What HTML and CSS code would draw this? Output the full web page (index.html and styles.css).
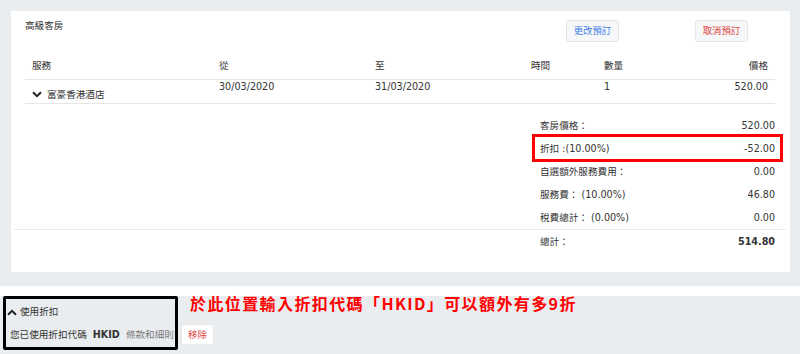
FILE: index.html
```html
<!DOCTYPE html>
<html lang="zh-Hant">
<head>
<meta charset="utf-8">
<title>訂單</title>
<link rel="stylesheet" href="styles.css">
</head>
<body>
<div class="page">
  <section class="card">
    <div class="card-head">
      <div class="room-title">高級客房</div>
      <div class="actions">
        <button class="btn btn-edit">更改預訂</button>
        <button class="btn btn-cancel">取消預訂</button>
      </div>
    </div>
    <div class="table">
      <div class="trow thead">
        <div>服務</div><div>從</div><div>至</div><div>時間</div><div>數量</div><div class="r">價格</div>
      </div>
      <div class="trow tbody">
        <div class="svc"><svg class="chev" width="10" height="7" viewBox="0 0 10 7"><polyline points="1,1.2 5,5.2 9,1.2" fill="none" stroke="#222" stroke-width="2"/></svg>富豪香港酒店</div>
        <div>30/03/2020</div><div>31/03/2020</div><div></div><div>1</div><div class="r">520.00</div>
      </div>
    </div>
    <div class="summary first">
      <div class="srow"><span>客房價格：</span><span>520.00</span></div>
      <div class="srow hl"><span>折扣 :(10.00%)</span><span>-52.00</span></div>
      <div class="srow"><span>自選額外服務費用：</span><span>0.00</span></div>
      <div class="srow"><span>服務費： (10.00%)</span><span>46.80</span></div>
      <div class="srow"><span>稅費總計： (0.00%)</span><span>0.00</span></div>
    </div>
    <div class="sep"></div>
    <div class="summary">
      <div class="srow total"><span>總計：</span><span>514.80</span></div>
    </div>
  </section>
</div>
<div class="strip"></div>
<section class="bottom">
  <div class="discount">
    <div class="disc-head"><svg class="chev-up" width="10" height="7" viewBox="0 0 10 7"><polyline points="1,5.8 5,1.8 9,5.8" fill="none" stroke="#222" stroke-width="2"/></svg>使用折扣</div>
    <div class="disc-code">您已使用折扣代碼 <b>HKID</b> <span class="terms">條款和細則</span></div>
  </div>
  <button class="btn btn-remove">移除</button>
  <div class="note">於此位置輸入折扣代碼「HKID」可以額外有多9折</div>
</section>
</body>
</html>
```
FILE: styles.css
```css
* { box-sizing: border-box; }
html, body { margin: 0; padding: 0; }
body {
  width: 800px;
  height: 354px;
  overflow: hidden;
  background: #eaedef;
  font-family: "DejaVu Sans", "Noto Sans CJK TC", sans-serif;
  font-size: 9.6px;
  color: #333;
}
.page { padding: 11px 10px 14px 11px; }
.card {
  background: #fff;
  padding: 9px 15px 19px 14px;
}
.card-head {
  display: flex;
  align-items: flex-start;
  height: 22px;
}
.room-title { flex: 1; line-height: 12px; }
.actions { display: flex; gap: 76px; margin-right: 27px; }
.btn {
  font-family: inherit;
  font-size: 9.4px;
  height: 22px;
  width: 53px;
  padding: 0;
  border: 1px solid #e3e6ea;
  border-radius: 3px;
  background: #f6f7f9;
  line-height: 20px;
}
.btn-edit { color: #3c7ce6; }
.btn-cancel { color: #e0433d; }
.trow {
  display: grid;
  grid-template-columns: 187px 156px 156px 73px 80px 84px;
  padding: 0 7px;
  border-bottom: 1px solid #e6e6e6;
  line-height: 12px;
}
.thead { padding-top: 18px; padding-bottom: 7px; }
.tbody { padding-top: 1px; height: 24px; }
.r { text-align: right; }
.svc { display: flex; align-items: center; padding-top: 5px; }
.chev { margin-right: 5px; flex: none; }
.summary {
  width: 235px;
  margin-left: auto;
}
.summary.first { padding-top: 10px; }
.srow {
  position: relative;
  display: flex;
  justify-content: space-between;
  line-height: 23px;
  height: 23px;
}
.hl::after {
  content: "";
  position: absolute;
  left: -8px;
  right: -8px;
  top: -3px;
  bottom: -2px;
  border: 3px solid #f00;
}
.total span:last-child { font-weight: bold; }
.sep {
  margin: 0 -11px;
  height: 1px;
  background: #e8e9eb;
}
.strip { height: 10px; background: #fff; }
.bottom {
  position: relative;
  display: flex;
  align-items: flex-end;
  padding-left: 3px;
}
.discount {
  width: 175px;
  border: 3px solid #000;
  border-radius: 2px;
  padding: 7px 0 6px 1px;
  line-height: 12px;
}
.disc-head { display: flex; align-items: center; }
.chev-up { margin-right: 3px; }
.disc-code { margin-top: 11px; padding-left: 3px; white-space: nowrap; }
.disc-code b { font-weight: bold; margin: 0 3px; }
.terms { color: #7a7a7a; }
.btn-remove {
  width: 33px;
  height: 21px;
  margin-left: 3px;
  margin-bottom: 5px;
  background: #fff;
  color: #e0433d;
  border-color: #e8e8e8;
}
.note {
  position: absolute;
  left: 190px;
  top: -1px;
  font-family: "Noto Sans CJK TC", sans-serif;
  font-weight: bold;
  font-size: 16px;
  letter-spacing: 1.4px;
  line-height: 17px;
  color: #f00;
  white-space: nowrap;
}
```
